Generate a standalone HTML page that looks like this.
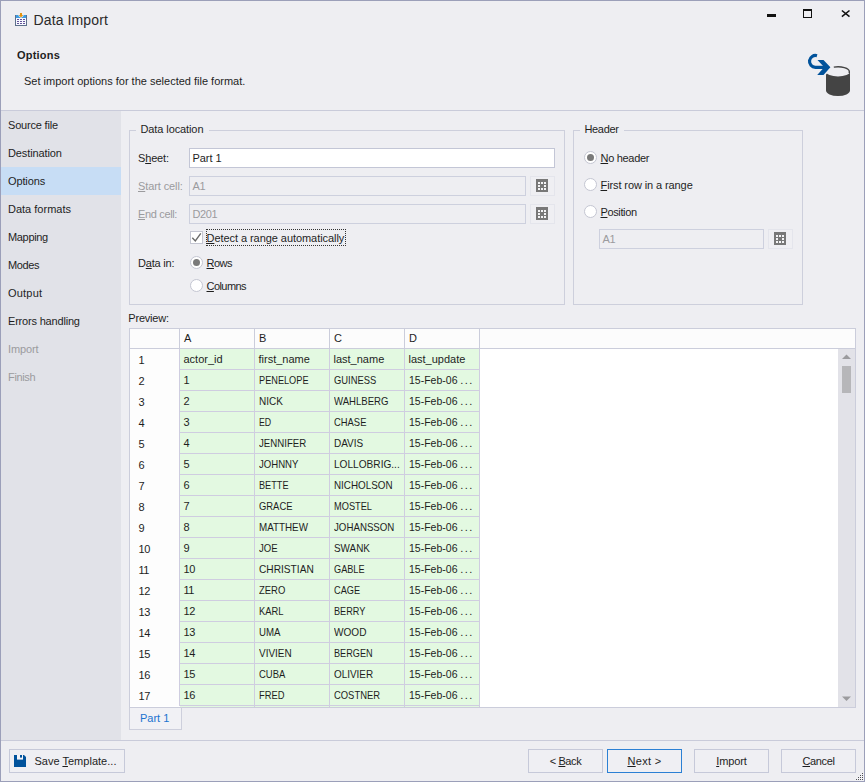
<!DOCTYPE html>
<html><head><meta charset="utf-8"><title>Data Import</title>
<style>
*{box-sizing:border-box;margin:0;padding:0}
html,body{width:865px;height:782px;overflow:hidden;background:#eeeef2}
body{font-family:"Liberation Sans",sans-serif;font-size:11px;color:#1e1e1e;position:relative}
#win{position:absolute;left:0;top:0;width:865px;height:782px;border:1px solid #9b9fb9;background:#eeeef2}
/* all children positioned relative to page origin via offset -1 */
#o{position:absolute;left:-1px;top:-1px;width:865px;height:782px}
.t{position:absolute;white-space:nowrap;letter-spacing:-.06px;line-height:14px;height:14px}
u{text-decoration:underline;text-underline-offset:1px;text-decoration-thickness:1px}
.dis{color:#9b9b9e}
#side{position:absolute;left:1px;top:111px;width:120px;height:629px;background:#e1e2e8}
#side .it{letter-spacing:-.12px;position:absolute;left:0;width:120px;height:28px;line-height:28px;padding-left:7px;white-space:nowrap}
#side .sel{background:#c7ddf5}
.hline{position:absolute;left:1px;width:863px;height:1px;background:#c9cbda}
.grp{position:absolute;border:1px solid #cdcfdc}
.grp .cap{position:absolute;top:-9px;left:6px;padding:0 6px 0 4.5px;background:#eeeef2;line-height:14px;height:14px;white-space:nowrap}
.inp{position:absolute;height:20px;border:1px solid #c3c6d6;background:#fff;line-height:18px;padding-left:2.4px;white-space:nowrap}
.inp.d{background:#eeeef2;color:#9b9b9e;border-color:#cdd0de}
.gbtn{position:absolute;width:25px;height:20px;border:1px solid #e4e5ec;background:#efeff3}
.gbtn svg{position:absolute;left:5px;top:2px}
.radio{position:absolute;width:13px;height:13px;border-radius:50%;border:1px solid #c4c6d2;background:#fff}
.radio.on::after{content:"";position:absolute;left:2px;top:2px;width:7px;height:7px;border-radius:50%;background:#7a7a7a}
.chk{position:absolute;width:13px;height:13px;border:1px solid #c4c6d2;background:#fff}
.btn{letter-spacing:-.1px;position:absolute;top:749px;height:24px;width:75px;border:1px solid #c6c9d9;background:#efeff3;text-align:center;line-height:22px;white-space:nowrap}
#grid{position:absolute;left:129px;top:328px;width:727px;height:380px;border:1px solid #cbcddb;background:#fff;overflow:hidden}
#grid .hd{position:absolute;top:0;height:20px;background:#fcfcfc;border-bottom:1px solid #cbcddb;border-right:1px solid #cbcddb;line-height:18px;padding-left:4px}
#grid .rn{position:absolute;left:0;width:50px;border-right:1px solid #cfcde0;height:21px;line-height:22px;padding-left:8.5px;background:#fdfdfd}
#grid .c{position:absolute;width:75px;height:21px;background:#e3f9e1;border-right:1px solid #cfcde0;border-bottom:1px solid #cfcde0;line-height:21px;padding-left:3.5px;white-space:nowrap;overflow:hidden}
.sx{display:inline-block;transform-origin:0 50%;white-space:nowrap}
.el{position:absolute;left:55.3px;top:0;letter-spacing:1.4px}
#sb{position:absolute;left:708px;top:20px;width:17px;height:358px;background:#e2e2e8}
</style></head><body>
<div id="win"><div id="o">
<!-- title bar -->
<svg style="position:absolute;left:15px;top:13px" width="12" height="13" viewBox="0 0 12 13">
 <rect x="0" y="2" width="12" height="11" fill="#5d6f8c"/>
 <rect x="1" y="2" width="10" height="3" fill="#3d9be0"/>
 <rect x="1" y="5" width="10" height="7" fill="#f6f8ff"/>
 <g fill="#62539a"><rect x="2" y="6" width="2" height="1"/><rect x="5" y="6" width="2" height="1"/><rect x="8" y="6" width="2" height="1"/>
 <rect x="2" y="8" width="2" height="1"/><rect x="5" y="8" width="2" height="1"/><rect x="8" y="8" width="2" height="1"/>
 <rect x="2" y="10" width="2" height="1"/><rect x="5" y="10" width="2" height="1"/><rect x="8" y="10" width="2" height="1"/></g>
 <path d="M3.5 1.5 L8.5 1.5 L8.5 3 L6 5 L3.5 3 Z" fill="#eeeef2"/>
 <path d="M5 0 H7 V2 H8.2 L6 4.6 L3.8 2 H5 Z" fill="#e2930f"/>
</svg>
<div class="t" style="left:33.5px;top:12px;font-size:14px;line-height:16px;height:16px;letter-spacing:.12px;color:#2a2a2a">Data Import</div>
<svg style="position:absolute;left:766px;top:8px" width="86" height="12" viewBox="0 0 86 12">
 <rect x="1" y="6" width="9" height="3" fill="#111"/>
 <rect x="37.5" y="1.5" width="8" height="8" fill="none" stroke="#111" stroke-width="1"/><rect x="37" y="1" width="9" height="2" fill="#111"/>
 <path d="M75.9 2.5 L83.5 8.7 M83.5 2.5 L75.9 8.7" stroke="#111" stroke-width="1.55" fill="none"/>
</svg>
<div class="t" style="left:17px;top:48px;font-weight:bold;letter-spacing:.2px">Options</div>
<div class="t" style="letter-spacing:-0.00px;left:24px;top:74px">Set import options for the selected file format.</div>
<!-- big icon -->
<svg style="position:absolute;left:806px;top:52px" width="46" height="46" viewBox="0 0 46 46">
 <path d="M20 19.5 A12 5 0 0 0 44 19.5 L44 38.5 A12 5.5 0 0 1 20 38.5 Z" fill="#444"/>
 <path d="M27.8 15.1 A11.3 4.7 0 0 1 43.3 19.5 L43.3 21" fill="none" stroke="#444" stroke-width="1.4"/>
 <path d="M10.5 6.6 L18 6.6 L26.4 15.3 L18.4 24.4 L9 24.4 L16 16.9 Z" fill="#eeeef2"/>
 <path d="M11 3.72 A5.9 5.9 0 1 0 9.4 15.3 L19 15.3" fill="none" stroke="#00529b" stroke-width="3.2"/>
 <path d="M11.5 8.1 L17.5 8.1 L24.4 15.3 L17.5 22.9 L11.2 22.9 L18.2 15.3 Z" fill="#00529b"/>
</svg>
<div class="hline" style="top:110px"></div>
<!-- sidebar -->
<div id="side">
 <div class="it" style="letter-spacing:-0.19px;top:0">Source file</div>
 <div class="it" style="letter-spacing:-0.12px;top:28px">Destination</div>
 <div class="it sel" style="top:56px">Options</div>
 <div class="it" style="letter-spacing:0.00px;top:84px">Data formats</div>
 <div class="it" style="letter-spacing:-0.33px;top:112px">Mapping</div>
 <div class="it" style="letter-spacing:-0.38px;top:140px">Modes</div>
 <div class="it" style="letter-spacing:0.20px;top:168px">Output</div>
 <div class="it" style="letter-spacing:-0.19px;top:196px">Errors handling</div>
 <div class="it dis" style="top:224px">Import</div>
 <div class="it dis" style="letter-spacing:-0.34px;top:252px">Finish</div>
</div>
<!-- Data location group -->
<div class="grp" style="left:129px;top:130px;width:436px;height:175px"><div class="cap" style="letter-spacing:-0.10px">Data location</div></div>
<div class="t" style="letter-spacing:-0.18px;left:138px;top:151px">S<u>h</u>eet:</div>
<div class="inp" style="letter-spacing:-0.02px;left:189px;top:148px;width:366px">Part 1</div>
<div class="t dis" style="letter-spacing:-0.10px;left:138px;top:179px"><u>S</u>tart cell:</div>
<div class="inp d" style="letter-spacing:-0.2px;left:189px;top:176px;width:337px">A1</div>
<div class="gbtn" style="left:530px;top:176px"><svg width="12" height="13" viewBox="0 0 12 13"><rect width="12" height="13" fill="#787878"/><g fill="#f4f4f6"><rect x="2" y="3" width="2" height="2"/><rect x="5" y="3" width="2" height="2"/><rect x="8" y="3" width="2" height="2"/><rect x="2" y="6" width="2" height="2"/><rect x="8" y="6" width="2" height="2"/><rect x="2" y="9" width="2" height="2"/><rect x="5" y="9" width="2" height="2"/><rect x="8" y="9" width="2" height="2"/></g></svg></div>
<div class="t dis" style="letter-spacing:-0.35px;left:138px;top:207px"><u>E</u>nd cell:</div>
<div class="inp d" style="letter-spacing:-0.32px;left:189px;top:204px;width:337px">D201</div>
<div class="gbtn" style="left:530px;top:204px"><svg width="12" height="13" viewBox="0 0 12 13"><rect width="12" height="13" fill="#787878"/><g fill="#f4f4f6"><rect x="2" y="3" width="2" height="2"/><rect x="5" y="3" width="2" height="2"/><rect x="8" y="3" width="2" height="2"/><rect x="2" y="6" width="2" height="2"/><rect x="8" y="6" width="2" height="2"/><rect x="2" y="9" width="2" height="2"/><rect x="5" y="9" width="2" height="2"/><rect x="8" y="9" width="2" height="2"/></g></svg></div>
<div class="chk" style="left:190px;top:231px"><svg width="11" height="11" viewBox="0 0 11 11" style="position:absolute;left:0;top:0"><path d="M1.3 5.8 L4.3 8.9 L9.8 1.4" fill="none" stroke="#6a6a6a" stroke-width="1.4"/></svg></div>
<div style="position:absolute;left:206px;top:229px;width:140px;height:17px;border:1px dotted #333"></div>
<div class="t" style="letter-spacing:-0.06px;left:206.5px;top:231px"><u>D</u>etect a range automatically</div>
<div class="t" style="letter-spacing:-0.19px;left:138px;top:256px">D<u>a</u>ta in:</div>
<div class="radio on" style="left:190px;top:256px"></div>
<div class="t" style="letter-spacing:-0.50px;left:206.5px;top:256px"><u>R</u>ows</div>
<div class="radio" style="left:190px;top:279px"></div>
<div class="t" style="letter-spacing:-0.56px;left:206.5px;top:279px"><u>C</u>olumns</div>
<!-- Header group -->
<div class="grp" style="left:573px;top:130px;width:230px;height:175px"><div class="cap" style="letter-spacing:-0.35px">Header</div></div>
<div class="radio on" style="left:584px;top:151px"></div>
<div class="t" style="letter-spacing:-0.30px;left:600.5px;top:151px"><u>N</u>o header</div>
<div class="radio" style="left:584px;top:178px"></div>
<div class="t" style="letter-spacing:-0.10px;left:600.5px;top:178px"><u>F</u>irst row in a range</div>
<div class="radio" style="left:584px;top:205px"></div>
<div class="t" style="letter-spacing:-0.37px;left:600.5px;top:205px"><u>P</u>osition</div>
<div class="inp d" style="letter-spacing:-0.2px;left:599px;top:229px;width:165px">A1</div>
<div class="gbtn" style="left:768px;top:229px"><svg width="12" height="13" viewBox="0 0 12 13"><rect width="12" height="13" fill="#787878"/><g fill="#f4f4f6"><rect x="2" y="3" width="2" height="2"/><rect x="5" y="3" width="2" height="2"/><rect x="8" y="3" width="2" height="2"/><rect x="2" y="6" width="2" height="2"/><rect x="8" y="6" width="2" height="2"/><rect x="2" y="9" width="2" height="2"/><rect x="5" y="9" width="2" height="2"/><rect x="8" y="9" width="2" height="2"/></g></svg></div>
<!-- Preview -->
<div class="t" style="letter-spacing:-0.21px;left:128.3px;top:311px">Preview:</div>
<div id="grid">
 <div class="hd" style="left:0;width:50px"></div>
 <div class="hd" style="left:50px;width:75px">A</div>
 <div class="hd" style="left:125px;width:75px">B</div>
 <div class="hd" style="left:200px;width:75px">C</div>
 <div class="hd" style="left:275px;width:75px">D</div>
 <div class="hd" style="left:350px;width:375px;border-right:0"></div>
<div class="rn" style="top:20px">1</div>
<div class="c" style="left:50px;top:20px">actor_id</div>
<div class="c" style="left:125px;top:20px">first_name</div>
<div class="c" style="left:200px;top:20px">last_name</div>
<div class="c" style="left:275px;top:20px">last_update</div>
<div class="rn" style="top:41px">2</div>
<div class="c" style="left:50px;top:41px">1</div>
<div class="c" style="left:125px;top:41px"><span class="sx" style="transform:scaleX(0.835)">PENELOPE</span></div>
<div class="c" style="left:200px;top:41px"><span class="sx" style="transform:scaleX(0.854)">GUINESS</span></div>
<div class="c" style="left:275px;top:41px"><span class="sx" style="transform:scaleX(.955)">15-Feb-06</span><span class="el">...</span></div>
<div class="rn" style="top:62px">3</div>
<div class="c" style="left:50px;top:62px">2</div>
<div class="c" style="left:125px;top:62px"><span class="sx" style="transform:scaleX(0.909)">NICK</span></div>
<div class="c" style="left:200px;top:62px"><span class="sx" style="transform:scaleX(0.871)">WAHLBERG</span></div>
<div class="c" style="left:275px;top:62px"><span class="sx" style="transform:scaleX(.955)">15-Feb-06</span><span class="el">...</span></div>
<div class="rn" style="top:83px">4</div>
<div class="c" style="left:50px;top:83px">3</div>
<div class="c" style="left:125px;top:83px"><span class="sx" style="transform:scaleX(0.798)">ED</span></div>
<div class="c" style="left:200px;top:83px"><span class="sx" style="transform:scaleX(0.855)">CHASE</span></div>
<div class="c" style="left:275px;top:83px"><span class="sx" style="transform:scaleX(.955)">15-Feb-06</span><span class="el">...</span></div>
<div class="rn" style="top:104px">5</div>
<div class="c" style="left:50px;top:104px">4</div>
<div class="c" style="left:125px;top:104px"><span class="sx" style="transform:scaleX(0.879)">JENNIFER</span></div>
<div class="c" style="left:200px;top:104px"><span class="sx" style="transform:scaleX(0.907)">DAVIS</span></div>
<div class="c" style="left:275px;top:104px"><span class="sx" style="transform:scaleX(.955)">15-Feb-06</span><span class="el">...</span></div>
<div class="rn" style="top:125px">6</div>
<div class="c" style="left:50px;top:125px">5</div>
<div class="c" style="left:125px;top:125px"><span class="sx" style="transform:scaleX(0.871)">JOHNNY</span></div>
<div class="c" style="left:200px;top:125px"><span class="sx" style="transform:scaleX(0.919)">LOLLOBRIG...</span></div>
<div class="c" style="left:275px;top:125px"><span class="sx" style="transform:scaleX(.955)">15-Feb-06</span><span class="el">...</span></div>
<div class="rn" style="top:146px">7</div>
<div class="c" style="left:50px;top:146px">6</div>
<div class="c" style="left:125px;top:146px"><span class="sx" style="transform:scaleX(0.832)">BETTE</span></div>
<div class="c" style="left:200px;top:146px"><span class="sx" style="transform:scaleX(0.895)">NICHOLSON</span></div>
<div class="c" style="left:275px;top:146px"><span class="sx" style="transform:scaleX(.955)">15-Feb-06</span><span class="el">...</span></div>
<div class="rn" style="top:167px">8</div>
<div class="c" style="left:50px;top:167px">7</div>
<div class="c" style="left:125px;top:167px"><span class="sx" style="transform:scaleX(0.856)">GRACE</span></div>
<div class="c" style="left:200px;top:167px"><span class="sx" style="transform:scaleX(0.840)">MOSTEL</span></div>
<div class="c" style="left:275px;top:167px"><span class="sx" style="transform:scaleX(.955)">15-Feb-06</span><span class="el">...</span></div>
<div class="rn" style="top:188px">9</div>
<div class="c" style="left:50px;top:188px">8</div>
<div class="c" style="left:125px;top:188px"><span class="sx" style="transform:scaleX(0.893)">MATTHEW</span></div>
<div class="c" style="left:200px;top:188px"><span class="sx" style="transform:scaleX(0.882)">JOHANSSON</span></div>
<div class="c" style="left:275px;top:188px"><span class="sx" style="transform:scaleX(.955)">15-Feb-06</span><span class="el">...</span></div>
<div class="rn" style="top:209px;letter-spacing:-.45px">10</div>
<div class="c" style="left:50px;top:209px">9</div>
<div class="c" style="left:125px;top:209px"><span class="sx" style="transform:scaleX(0.869)">JOE</span></div>
<div class="c" style="left:200px;top:209px"><span class="sx" style="transform:scaleX(0.899)">SWANK</span></div>
<div class="c" style="left:275px;top:209px"><span class="sx" style="transform:scaleX(.955)">15-Feb-06</span><span class="el">...</span></div>
<div class="rn" style="top:230px;letter-spacing:-.45px">11</div>
<div class="c" style="left:50px;top:230px"><span style="letter-spacing:-.45px">10</span></div>
<div class="c" style="left:125px;top:230px"><span class="sx" style="transform:scaleX(0.924)">CHRISTIAN</span></div>
<div class="c" style="left:200px;top:230px"><span class="sx" style="transform:scaleX(0.834)">GABLE</span></div>
<div class="c" style="left:275px;top:230px"><span class="sx" style="transform:scaleX(.955)">15-Feb-06</span><span class="el">...</span></div>
<div class="rn" style="top:251px;letter-spacing:-.45px">12</div>
<div class="c" style="left:50px;top:251px"><span style="letter-spacing:-.45px">11</span></div>
<div class="c" style="left:125px;top:251px"><span class="sx" style="transform:scaleX(0.861)">ZERO</span></div>
<div class="c" style="left:200px;top:251px"><span class="sx" style="transform:scaleX(0.837)">CAGE</span></div>
<div class="c" style="left:275px;top:251px"><span class="sx" style="transform:scaleX(.955)">15-Feb-06</span><span class="el">...</span></div>
<div class="rn" style="top:272px;letter-spacing:-.45px">13</div>
<div class="c" style="left:50px;top:272px"><span style="letter-spacing:-.45px">12</span></div>
<div class="c" style="left:125px;top:272px"><span class="sx" style="transform:scaleX(0.853)">KARL</span></div>
<div class="c" style="left:200px;top:272px"><span class="sx" style="transform:scaleX(0.833)">BERRY</span></div>
<div class="c" style="left:275px;top:272px"><span class="sx" style="transform:scaleX(.955)">15-Feb-06</span><span class="el">...</span></div>
<div class="rn" style="top:293px;letter-spacing:-.45px">14</div>
<div class="c" style="left:50px;top:293px"><span style="letter-spacing:-.45px">13</span></div>
<div class="c" style="left:125px;top:293px"><span class="sx" style="transform:scaleX(0.880)">UMA</span></div>
<div class="c" style="left:200px;top:293px"><span class="sx" style="transform:scaleX(0.914)">WOOD</span></div>
<div class="c" style="left:275px;top:293px"><span class="sx" style="transform:scaleX(.955)">15-Feb-06</span><span class="el">...</span></div>
<div class="rn" style="top:314px;letter-spacing:-.45px">15</div>
<div class="c" style="left:50px;top:314px"><span style="letter-spacing:-.45px">14</span></div>
<div class="c" style="left:125px;top:314px"><span class="sx" style="transform:scaleX(0.907)">VIVIEN</span></div>
<div class="c" style="left:200px;top:314px"><span class="sx" style="transform:scaleX(0.831)">BERGEN</span></div>
<div class="c" style="left:275px;top:314px"><span class="sx" style="transform:scaleX(.955)">15-Feb-06</span><span class="el">...</span></div>
<div class="rn" style="top:335px;letter-spacing:-.45px">16</div>
<div class="c" style="left:50px;top:335px"><span style="letter-spacing:-.45px">15</span></div>
<div class="c" style="left:125px;top:335px"><span class="sx" style="transform:scaleX(0.861)">CUBA</span></div>
<div class="c" style="left:200px;top:335px"><span class="sx" style="transform:scaleX(0.901)">OLIVIER</span></div>
<div class="c" style="left:275px;top:335px"><span class="sx" style="transform:scaleX(.955)">15-Feb-06</span><span class="el">...</span></div>
<div class="rn" style="top:356px;letter-spacing:-.45px">17</div>
<div class="c" style="left:50px;top:356px"><span style="letter-spacing:-.45px">16</span></div>
<div class="c" style="left:125px;top:356px"><span class="sx" style="transform:scaleX(0.852)">FRED</span></div>
<div class="c" style="left:200px;top:356px"><span class="sx" style="transform:scaleX(0.855)">COSTNER</span></div>
<div class="c" style="left:275px;top:356px"><span class="sx" style="transform:scaleX(.955)">15-Feb-06</span><span class="el">...</span></div>
<div class="c" style="left:50px;top:377px;height:1px;border-bottom:0"></div>
<div class="c" style="left:125px;top:377px;height:1px;border-bottom:0"></div>
<div class="c" style="left:200px;top:377px;height:1px;border-bottom:0"></div>
<div class="c" style="left:275px;top:377px;height:1px;border-bottom:0"></div>
 <div id="sb">
  <svg width="17" height="358" viewBox="0 0 17 358" style="position:absolute;left:0;top:0">
   <path d="M4 10 L13 10 L8.5 5.5 Z" fill="#9b9b9e"/>
   <rect x="4" y="17" width="9" height="27" fill="#b6b6b9"/>
   <path d="M4 347.500 L13 347.500 L8.5 352 Z" fill="#9b9b9e"/>
  </svg>
 </div>
</div>
<!-- sheet tab -->
<div style="position:absolute;left:129px;top:707px;width:53px;height:23px;border:1px solid #cdcfdc;border-top-color:#cbcddb;background:#f1f1f5"></div>
<div class="t" style="letter-spacing:-0.02px;left:140px;top:711px;color:#1b74d0">Part 1</div>
<div class="hline" style="top:740px"></div>
<!-- footer -->
<div class="btn" style="letter-spacing:0.02px;left:9px;width:116px;text-align:left;padding-left:24.4px">Save <u>T</u>emplate...</div>
<svg style="position:absolute;left:14px;top:755px" width="12" height="12" viewBox="0 0 12 12">
 <path d="M0 0 H10 L12 2 V12 H0 Z" fill="#00529b"/>
 <rect x="3" y="0" width="6" height="4.6" fill="#f4f4f8"/>
 <rect x="6" y="0" width="2" height="2.6" fill="#00529b"/>
</svg>
<div class="btn" style="letter-spacing:-0.39px;left:528px">&lt; <u>B</u>ack</div>
<div class="btn" style="letter-spacing:0.35px;left:607px;border-color:#2b80d4"><u>N</u>ext &gt;</div>
<div class="btn" style="left:694px"><u>I</u>mport</div>
<div class="btn" style="letter-spacing:-0.36px;left:781px"><u>C</u>ancel</div>
<!-- size grip -->
<svg style="position:absolute;left:853px;top:770px" width="11" height="11" viewBox="0 0 11 11">
 <path d="M10.5 1.5 L10.5 10.5 L1.5 10.5 Z" fill="#f3f3f6"/>
 <g fill="#4f4f55"><rect x="9" y="3" width="1" height="1"/><rect x="9" y="5" width="1" height="1"/><rect x="7" y="5" width="1" height="1"/><rect x="9" y="7" width="1" height="1"/><rect x="7" y="7" width="1" height="1"/><rect x="5" y="7" width="1" height="1"/><rect x="9" y="9" width="1" height="1"/><rect x="7" y="9" width="1" height="1"/><rect x="5" y="9" width="1" height="1"/><rect x="3" y="9" width="1" height="1"/></g>
</svg>
</div></div>

</body></html>
